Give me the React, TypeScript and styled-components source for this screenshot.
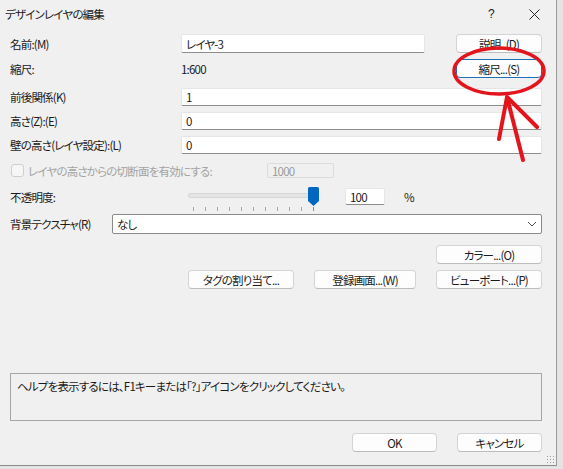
import styled, { createGlobalStyle, css } from "styled-components";

const GlobalStyle = createGlobalStyle`
  html, body {
    margin: 0;
    padding: 0;
    background: #e4e4e4;
  }
  body {
    font-family: "Noto Sans CJK JP", "Liberation Sans", sans-serif;
    font-size: 11.5px;
    font-feature-settings: "palt";
    letter-spacing: -0.8px;
    color: #1a1a1a;
  }
`;

/**
 * ダイアログ全体
 */
const Window = styled.div`
  position: relative;
  width: 556px;
  height: 465px;
  background: #f0f0f0;
  border-right: 1px solid #9a9a9a;
  border-bottom: 1px solid #8a8a8a;
  display: flex;
  flex-direction: column;
`;

const TitleBar = styled.div`
  height: 28px;
  display: flex;
  align-items: center;
  padding-left: 5px;
  & > .title {
    flex: 1;
  }
  & > .help {
    width: 20px;
    text-align: center;
    font-size: 12px;
    margin-right: 28px;
    font-family: "Liberation Sans", sans-serif;
  }
  & > .close {
    display: flex;
    margin-right: 16px;
  }
`;

const Body = styled.div`
  flex: 1;
  display: flex;
  flex-direction: column;
  padding: 0 14px 0 10px;
`;

const Row = styled.div<{ $top: number; $h?: number }>`
  display: flex;
  align-items: center;
  margin-top: ${(p) => p.$top}px;
  height: ${(p) => p.$h ?? 19}px;
`;

const Label = styled.div<{ $w?: number; $muted?: boolean }>`
  width: ${(p) => p.$w ?? 171}px;
  flex-shrink: 0;
  white-space: nowrap;
  color: ${(p) => (p.$muted ? "#a3a3a3" : "#1a1a1a")};
`;

const TextBox = styled.div<{ $w?: number; $disabled?: boolean }>`
  ${(p) => (p.$w ? css`width: ${p.$w}px;` : css`flex: 1;`)}
  height: 100%;
  box-sizing: border-box;
  display: flex;
  align-items: center;
  padding-left: 4px;
  background: ${(p) => (p.$disabled ? "#f0f0f0" : "#ffffff")};
  border: 1px solid ${(p) => (p.$disabled ? "#dcdcdc" : "#e6e6e6")};
  border-bottom-color: ${(p) => (p.$disabled ? "#dcdcdc" : "#8d8d8d")};
  color: ${(p) => (p.$disabled ? "#9a9a9a" : "#1a1a1a")};
  border-radius: 2px;
`;

const Button = styled.button<{ $w?: number; $focus?: boolean }>`
  width: ${(p) => p.$w ?? 86}px;
  height: 19px;
  box-sizing: border-box;
  padding: 0;
  font: inherit;
  letter-spacing: inherit;
  font-feature-settings: inherit;
  white-space: pre;
  color: #1a1a1a;
  background: #fdfdfd;
  border: 1px solid ${(p) => (p.$focus ? "#1f6fb5" : "#d4d4d4")};
  border-bottom-color: ${(p) => (p.$focus ? "#1f6fb5" : "#bcbcbc")};
  border-radius: 4px;
  flex-shrink: 0;
`;

const Checkbox = styled.span`
  width: 13px;
  height: 13px;
  box-sizing: border-box;
  border: 1px solid #cfcfcf;
  border-radius: 3px;
  background: #f6f6f6;
  margin: 0 4px 0 1px;
  flex-shrink: 0;
`;

const SliderRow = styled.div`
  display: flex;
  margin-top: 8px;
  height: 28px;
  & > .label {
    width: 178px;
    padding-top: 3px;
  }
`;

const Slider = styled.div`
  position: relative;
  width: 131px;
  height: 28px;
  & > .track {
    position: absolute;
    left: 0;
    right: 0;
    top: 7px;
    height: 3px;
    background: #e4e4e4;
    border: 1px solid #d8d8d8;
    border-radius: 2px;
  }
  & > svg {
    position: absolute;
    left: 120px;
    top: 1px;
  }
`;

const Ticks = styled.div`
  position: absolute;
  left: 5px;
  top: 21px;
  display: flex;
  gap: 11px;
  & > span {
    width: 1px;
    height: 4px;
    background: #a8a8a8;
  }
  & > span:last-child {
    background: #5b8fd0;
  }
`;

const Percent = styled.div`
  display: flex;
  align-items: flex-start;
  margin-left: 26px;
  & > .unit {
    margin-left: 19px;
    padding-top: 3px;
  }
`;

const SmallBox = styled(TextBox)`
  height: 17px;
  margin-top: 2px;
`;

const Select = styled.div`
  flex: 1;
  height: 20px;
  box-sizing: border-box;
  display: flex;
  align-items: center;
  justify-content: space-between;
  padding: 0 4px 0 4px;
  background: #ffffff;
  border: 1px solid #8a8a8a;
  border-radius: 2px;
`;

const ButtonRow = styled.div<{ $top: number }>`
  display: flex;
  justify-content: flex-end;
  gap: 20px;
  margin-top: ${(p) => p.$top}px;
`;

const Spacer = styled.span`
  flex: 1;
`;

const HelpBox = styled.div`
  margin-top: 84px;
  height: 48px;
  box-sizing: border-box;
  border: 1px solid #a6a6a6;
  padding: 4px 6px;
`;

const Grip = styled.div`
  position: absolute;
  right: 2px;
  bottom: 2px;
  width: 8px;
  height: 8px;
  background-image: radial-gradient(#9c9c9c 0.8px, transparent 1px);
  background-size: 3px 3px;
`;

const Annotation = styled.svg`
  position: absolute;
  left: 0;
  top: 0;
  pointer-events: none;
`;

export default function App() {
  return (
    <>
      <GlobalStyle />
      <Window>
        <TitleBar>
          <span className="title">デザインレイヤの編集</span>
          <span className="help">?</span>
          <span className="close">
            <svg width="11" height="11" viewBox="0 0 11 11">
              <path d="M0.5 0.5 L10.5 10.5 M10.5 0.5 L0.5 10.5" stroke="#222" strokeWidth="1" />
            </svg>
          </span>
        </TitleBar>

        <Body>
          <Row $top={6}>
            <Label>名前:(M)</Label>
            <TextBox $w={244}>レイヤ-3</TextBox>
            <Spacer />
            <Button>{"説明   (D)"}</Button>
          </Row>
          <Row $top={6}>
            <Label>縮尺:</Label>
            <Spacer>1:600</Spacer>
            <Button $focus>縮尺...(S)</Button>
          </Row>
          <Row $top={10} $h={18}>
            <Label>前後関係(K)</Label>
            <TextBox>1</TextBox>
          </Row>
          <Row $top={6} $h={18}>
            <Label>高さ(Z):(E)</Label>
            <TextBox>0</TextBox>
          </Row>
          <Row $top={6} $h={18}>
            <Label>壁の高さ(レイヤ設定):(L)</Label>
            <TextBox>0</TextBox>
          </Row>
          <Row $top={9} $h={15}>
            <Checkbox />
            <Label $w={239} $muted>
              レイヤの高さからの切断面を有効にする:
            </Label>
            <TextBox $w={67} $disabled>
              1000
            </TextBox>
          </Row>

          <SliderRow>
            <span className="label">不透明度:</span>
            <Slider>
              <div className="track" />
              <svg width="11" height="19" viewBox="0 0 11 19">
                <path d="M1.5 0 H9.5 Q11 0 11 1.5 V14 L5.5 19 L0 14 V1.5 Q0 0 1.5 0 Z" fill="#0067c0" />
              </svg>
              <Ticks>
                {Array.from({ length: 11 }).map((_, i) => (
                  <span key={i} />
                ))}
              </Ticks>
            </Slider>
            <Percent>
              <SmallBox $w={40}>100</SmallBox>
              <span className="unit">%</span>
            </Percent>
          </SliderRow>

          <Row $top={0} $h={20}>
            <Label $w={102}>背景テクスチャ(R)</Label>
            <Select>
              <span>なし</span>
              <svg width="10" height="6" viewBox="0 0 10 6">
                <path d="M1 1 L5 5 L9 1" stroke="#555" strokeWidth="1" fill="none" />
              </svg>
            </Select>
          </Row>

          <ButtonRow $top={11}>
            <Button $w={106}>カラー...(O)</Button>
          </ButtonRow>
          <ButtonRow $top={6}>
            <Button $w={106}>タグの割り当て...</Button>
            <Button $w={102}>登録画面...(W)</Button>
            <Button $w={106}>ビューポート...(P)</Button>
          </ButtonRow>

          <HelpBox>ヘルプを表示するには、F1キーまたは「?」アイコンをクリックしてください。</HelpBox>

          <ButtonRow $top={12}>
            <Button $w={85}>OK</Button>
            <Button $w={85}>キャンセル</Button>
          </ButtonRow>
        </Body>

        <Grip />

        {/* 赤い注釈 */}
        <Annotation width="556" height="465" viewBox="0 0 556 465">
          <ellipse cx="499" cy="71" rx="45" ry="23" fill="none" stroke="#e3141c" strokeWidth="3.5" />
          <path
            d="M507 97 L499 139 M507 97 L523 160 M507 97 L537 127"
            stroke="#e3141c"
            strokeWidth="4"
            strokeLinecap="round"
            fill="none"
          />
        </Annotation>
      </Window>
    </>
  );
}
